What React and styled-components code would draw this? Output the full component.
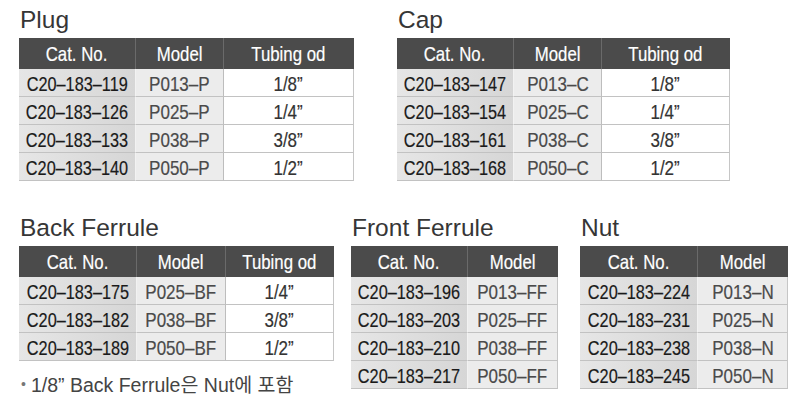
import React from 'react';
import styled, { createGlobalStyle } from 'styled-components';

const GlobalStyle = createGlobalStyle`
  html, body {
    margin: 0;
    padding: 0;
    background: #ffffff;
  }
  body {
    font-family: "Liberation Sans", "Noto Sans CJK KR", sans-serif;
  }
`;

const plug = [
  ['C20–183–119', 'P013–P', '1/8”'],
  ['C20–183–126', 'P025–P', '1/4”'],
  ['C20–183–133', 'P038–P', '3/8”'],
  ['C20–183–140', 'P050–P', '1/2”'],
];

const cap = [
  ['C20–183–147', 'P013–C', '1/8”'],
  ['C20–183–154', 'P025–C', '1/4”'],
  ['C20–183–161', 'P038–C', '3/8”'],
  ['C20–183–168', 'P050–C', '1/2”'],
];

const backFerrule = [
  ['C20–183–175', 'P025–BF', '1/4”'],
  ['C20–183–182', 'P038–BF', '3/8”'],
  ['C20–183–189', 'P050–BF', '1/2”'],
];

const frontFerrule = [
  ['C20–183–196', 'P013–FF'],
  ['C20–183–203', 'P025–FF'],
  ['C20–183–210', 'P038–FF'],
  ['C20–183–217', 'P050–FF'],
];

const nut = [
  ['C20–183–224', 'P013–N'],
  ['C20–183–231', 'P025–N'],
  ['C20–183–238', 'P038–N'],
  ['C20–183–245', 'P050–N'],
];

const PartTable = ({ title, widths, rows, ml }) => {
  const heads = ['Cat. No.', 'Model', 'Tubing od'].slice(0, widths.length);
  return (
    <Section $ml={ml}>
      <Title>{title}</Title>
      <Grid $cols={widths.map(w => w + 'px').join(' ')}>
        {heads.map((h, i) => (
          <HeadCell key={h} $last={i === heads.length - 1}>
            <Narrow $scale={0.8}>{h}</Narrow>
          </HeadCell>
        ))}
        {rows.map((row, r) =>
          row.map((val, c) => (
            <Cell key={r + '-' + c} $col={c} $last={c === row.length - 1}>
              <Narrow $scale={c === 0 ? 0.775 : 0.81}>{val}</Narrow>
            </Cell>
          ))
        )}
      </Grid>
    </Section>
  );
};

const App = () => {
  return (
    <>
      <GlobalStyle />
      <Page>
        <TopRow>
          <PartTable title="Plug" widths={[117, 88, 130]} rows={plug} />
          <PartTable title="Cap" widths={[117, 88, 128]} rows={cap} ml={43} />
        </TopRow>
        <BottomRow>
          <Column>
            <PartTable title="Back Ferrule" widths={[118, 89, 108]} rows={backFerrule} />
            <Note>
              <Bullet>•</Bullet>1/8” Back Ferrule은 Nut에 포함
            </Note>
          </Column>
          <PartTable title="Front Ferrule" widths={[117, 90]} rows={frontFerrule} ml={17} />
          <PartTable title="Nut" widths={[118, 90]} rows={nut} ml={22} />
        </BottomRow>
      </Page>
    </>
  );
};

export default App;

const Page = styled.div`
  width: 800px;
  height: 417px;
  box-sizing: border-box;
  padding: 6px 0 0 19px;
  overflow: hidden;
`;

const TopRow = styled.div`
  display: flex;
  align-items: flex-start;
`;

const BottomRow = styled.div`
  display: flex;
  align-items: flex-start;
  margin-top: 33px;
`;

const Column = styled.div`
  display: flex;
  flex-direction: column;
`;

const Section = styled.div`
  display: flex;
  flex-direction: column;
  margin-left: ${p => (p.$ml ? p.$ml + 'px' : '0')};
`;

const Title = styled.div`
  font-family: "Liberation Sans", sans-serif;
  font-size: 24.5px;
  line-height: 28px;
  color: #363636;
  margin-bottom: 4px;
  padding-left: 1px;
`;

const Grid = styled.div`
  display: grid;
  grid-template-columns: ${p => p.$cols};
  grid-template-rows: 31px;
  grid-auto-rows: 28px;
`;

/* the catalogue uses a condensed face; squeeze Liberation Sans to match */
const Narrow = styled.span`
  display: inline-block;
  white-space: nowrap;
  transform: scaleX(${p => p.$scale});
  font-family: "Liberation Sans", sans-serif;
  font-size: 21px;
  line-height: 1;
  -webkit-text-stroke: 0.2px currentColor;
`;

const HeadCell = styled.div`
  background: #4b4b4b;
  color: #ffffff;
  display: flex;
  align-items: center;
  justify-content: center;
  box-sizing: border-box;
  border-right: 1px solid ${p => (p.$last ? '#4b4b4b' : '#6a6a6a')};
  padding-bottom: 1px;
`;

const cellBg = ['linear-gradient(to right, #e6e6e6, #d6d6d6)', '#ececec', '#ffffff'];
const cellColor = ['#1a1a1a', '#4a4a4a', '#333333'];
const cellRight = ['#f2f2f2', '#bdbdbd', '#bdbdbd'];

const Cell = styled.div`
  background: ${p => cellBg[p.$col]};
  color: ${p => cellColor[p.$col]};
  display: flex;
  align-items: center;
  justify-content: center;
  box-sizing: border-box;
  border-bottom: 1px solid #c2c2c2;
  border-right: 1px solid ${p => (p.$last ? '#c6c6c6' : cellRight[p.$col])};
  padding-top: 1px;
`;

const Note = styled.div`
  display: flex;
  align-items: center;
  margin-top: 8px;
  font-family: "Liberation Sans", "Noto Sans CJK KR", sans-serif;
  font-size: 19.5px;
  color: #444444;
  padding-left: 2px;
`;

const Bullet = styled.span`
  font-size: 14px;
  color: #777777;
  margin-right: 5px;
`;
